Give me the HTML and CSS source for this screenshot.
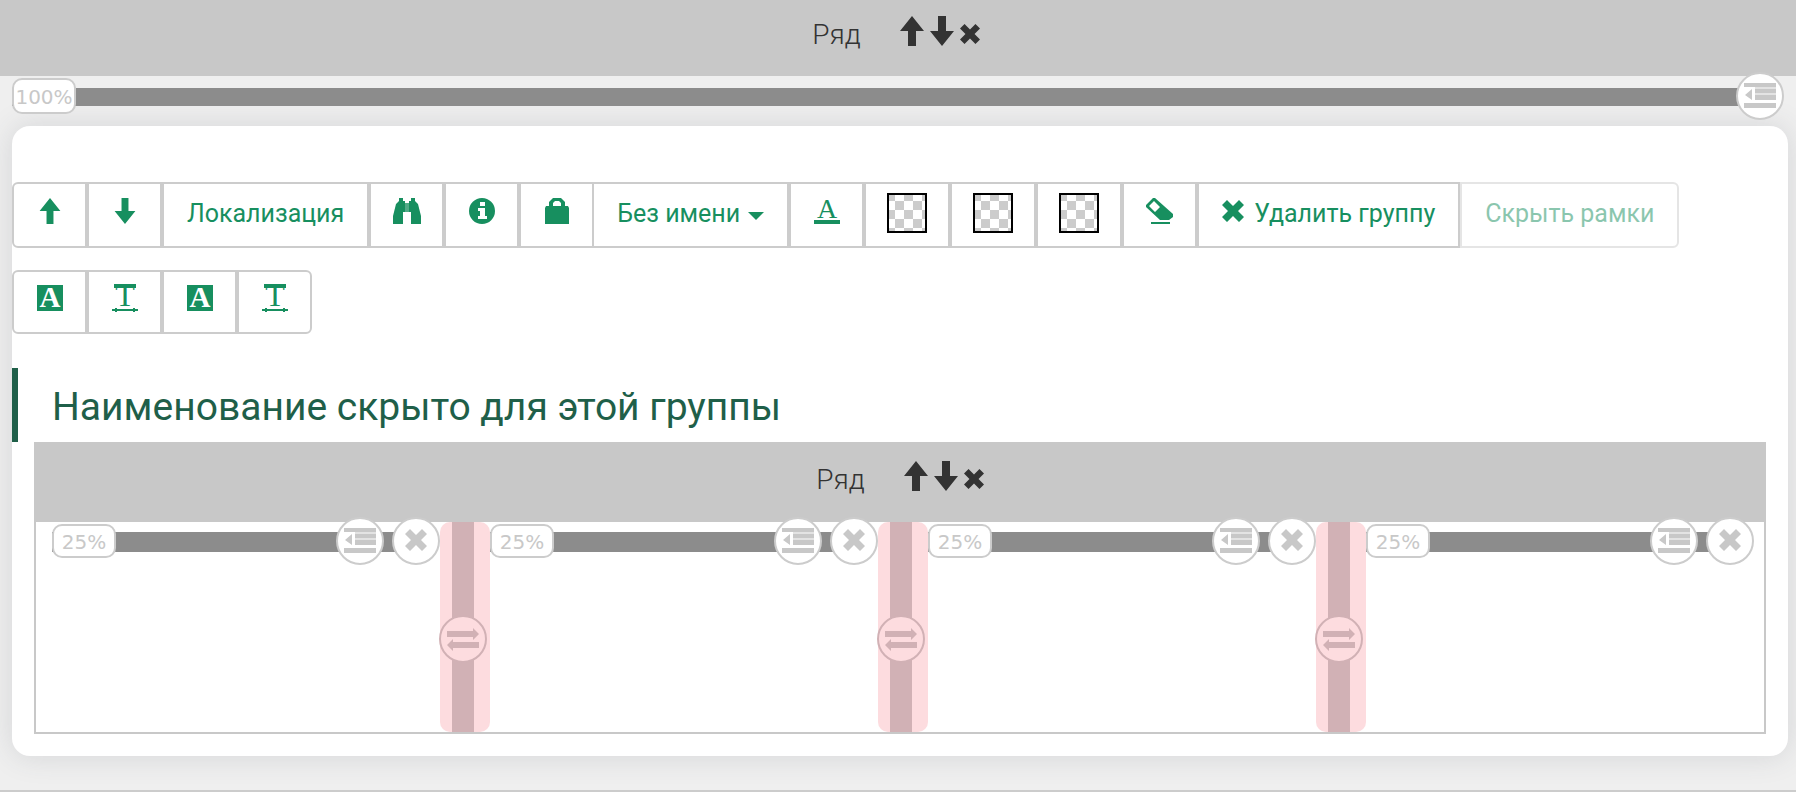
FILE: index.html
```html
<!DOCTYPE html>
<html lang="ru">
<head>
<meta charset="utf-8">
<title>Редактор групп</title>
<link rel="stylesheet" href="styles.css">
</head>
<body>
<svg class="defs" aria-hidden="true">
  <symbol id="up" viewBox="0 0 24 30"><path d="M12 0 24 15H16V30H8V15H0Z"/></symbol>
  <symbol id="down" viewBox="0 0 24 30"><path d="M8 0H16V15H24L12 30 0 15H8Z"/></symbol>
  <symbol id="cross" viewBox="0 0 22 22"><path d="M5 0 11 6 17 0 22 5 16 11 22 17 17 22 11 16 5 22 0 17 6 11 0 5Z"/></symbol>
  <symbol id="binoculars" viewBox="0 0 28 26"><path d="M6 0H10V3H12V14H10V26H0V18L3 6 6 3ZM18 0H22V3L25 6 28 18V26H18V14H16V3H18Z"/><path class="soft" d="M12 5H16V14H12Z"/></symbol>
  <symbol id="info" viewBox="0 0 26 26"><path fill-rule="evenodd" d="M13 0A13 13 0 1 1 13 26A13 13 0 1 1 13 0ZM11 4V8H16V4ZM9 10V13H11V18H9V21H18V18H16V10Z"/></symbol>
  <symbol id="bag" viewBox="0 0 26 26"><path d="M5 8V4L9 0H17L21 4V8H24L25 10V26H1V10L2 8ZM9 8H17V5L15 3H11L9 5Z" fill-rule="evenodd"/></symbol>
  <symbol id="eraser" viewBox="0 0 28 26"><path fill-rule="evenodd" d="M9 0 27 16V19L23 22H14L0 9V7L7 0ZM8 3 3 8 9 14 14 9Z"/><path d="M5 24H24V26H5Z"/></symbol>
  <symbol id="outdent" viewBox="0 0 32 25"><path d="M0 0H32V4H0ZM11 6H32V10H11ZM11 12H32V17H11ZM0 20H32V25H0ZM8 6V17L1 12Z"/><path class="faint" d="M11 4H32V6H11ZM11 10H32V12H11Z"/></symbol>
  <symbol id="swap" viewBox="0 0 32 24"><path d="M0 3H26V0L32 6 26 12V9H0ZM32 14H6V11L0 17 6 23V20H32Z"/></symbol>
</svg>

<header class="row-head">
  <span>Ряд</span>
  <div class="row-actions">
    <button class="plain" aria-label="Вверх"><svg class="arrow"><use href="#up"/></svg></button>
    <button class="plain" aria-label="Вниз"><svg class="arrow"><use href="#down"/></svg></button>
    <button class="plain" aria-label="Удалить"><svg class="cross"><use href="#cross"/></svg></button>
  </div>
</header>

<main class="page">
  <div class="rail outer">
    <input class="badge" aria-label="Ширина" value="100%">
    <button class="round" aria-label="Отступ"><svg class="outdent"><use href="#outdent"/></svg></button>
  </div>

  <section class="card">
    <div class="toolbar">
      <button class="btn" aria-label="Вверх"><svg class="small-arrow"><use href="#up"/></svg></button>
      <button class="btn" aria-label="Вниз"><svg class="small-arrow"><use href="#down"/></svg></button>
      <button class="btn label">Локализация</button>
      <button class="btn" aria-label="Поиск"><svg class="wide"><use href="#binoculars"/></svg></button>
      <button class="btn" aria-label="Информация"><svg><use href="#info"/></svg></button>
      <button class="btn joined" aria-label="Блокировка"><svg><use href="#bag"/></svg></button>
      <button class="btn label">Без имени<span class="caret"></span></button>
      <button class="btn" aria-label="Цвет текста"><svg viewBox="0 0 26 26"><text class="glyph" x="13" y="20" font-size="28">A</text><path d="M0 22H26V26H0Z"/></svg></button>
      <button class="btn" aria-label="Цвет 1"><span class="swatch"></span></button>
      <button class="btn" aria-label="Цвет 2"><span class="swatch"></span></button>
      <button class="btn" aria-label="Цвет 3"><span class="swatch"></span></button>
      <button class="btn" aria-label="Очистить"><svg class="wide"><use href="#eraser"/></svg></button>
      <button class="btn label"><svg class="cross"><use href="#cross"/></svg>Удалить группу</button>
      <button class="btn label" disabled>Скрыть рамки</button>
    </div>
    <div class="toolbar compact">
      <button class="btn" aria-label="Фон"><svg viewBox="0 0 26 26"><path d="M0 0H26V26H0Z"/><text class="glyph inverse" x="13" y="22" font-size="29">A</text></svg></button>
      <button class="btn" aria-label="Ширина текста"><svg class="tall" viewBox="0 0 26 28"><text class="glyph" x="13" y="22" font-size="32">T</text><path d="M2 0H24V4H2ZM0 25H26V27H0ZM3 24H5V28H3ZM21 24H23V28H21Z"/></svg></button>
      <button class="btn" aria-label="Фон заголовка"><svg viewBox="0 0 26 26"><path d="M0 0H26V26H0Z"/><text class="glyph inverse" x="13" y="22" font-size="29">A</text></svg></button>
      <button class="btn" aria-label="Ширина заголовка"><svg class="tall" viewBox="0 0 26 28"><text class="glyph" x="13" y="22" font-size="32">T</text><path d="M2 0H24V4H2ZM0 25H26V27H0ZM3 24H5V28H3ZM21 24H23V28H21Z"/></svg></button>
    </div>

    <h2 class="title">Наименование скрыто для этой группы</h2>

    <div class="group">
      <div class="row-head inner">
        <span>Ряд</span>
        <div class="row-actions">
          <button class="plain" aria-label="Вверх"><svg class="arrow"><use href="#up"/></svg></button>
          <button class="plain" aria-label="Вниз"><svg class="arrow"><use href="#down"/></svg></button>
          <button class="plain" aria-label="Удалить"><svg class="cross"><use href="#cross"/></svg></button>
        </div>
      </div>
      <div class="columns">
        <div class="rail">
          <input class="badge" aria-label="Ширина колонки 1" value="25%">
          <button class="round" aria-label="Отступ"><svg class="outdent"><use href="#outdent"/></svg></button>
          <button class="round" aria-label="Удалить"><svg class="cross"><use href="#cross"/></svg></button>
        </div>
        <div class="divider"><button class="round" aria-label="Поменять"><svg class="swap"><use href="#swap"/></svg></button></div>
        <div class="rail">
          <input class="badge" aria-label="Ширина колонки 2" value="25%">
          <button class="round" aria-label="Отступ"><svg class="outdent"><use href="#outdent"/></svg></button>
          <button class="round" aria-label="Удалить"><svg class="cross"><use href="#cross"/></svg></button>
        </div>
        <div class="divider"><button class="round" aria-label="Поменять"><svg class="swap"><use href="#swap"/></svg></button></div>
        <div class="rail">
          <input class="badge" aria-label="Ширина колонки 3" value="25%">
          <button class="round" aria-label="Отступ"><svg class="outdent"><use href="#outdent"/></svg></button>
          <button class="round" aria-label="Удалить"><svg class="cross"><use href="#cross"/></svg></button>
        </div>
        <div class="divider"><button class="round" aria-label="Поменять"><svg class="swap"><use href="#swap"/></svg></button></div>
        <div class="rail">
          <input class="badge" aria-label="Ширина колонки 4" value="25%">
          <button class="round" aria-label="Отступ"><svg class="outdent"><use href="#outdent"/></svg></button>
          <button class="round" aria-label="Удалить"><svg class="cross"><use href="#cross"/></svg></button>
        </div>
      </div>
    </div>
  </section>
</main>
</body>
</html>
```

FILE: styles.css
```css
* { box-sizing: border-box; }

body {
  margin: 0;
  background: #efefef;
  color: #333;
  font-family: Roboto, "Noto Sans", sans-serif;
  font-size: 25px;
}

button, input { font: inherit; margin: 0; }
svg { display: block; width: 26px; height: 26px; fill: currentColor; overflow: visible; }
.defs { position: absolute; width: 0; height: 0; }
.glyph { font-family: "Liberation Serif", serif; text-anchor: middle; }
.inverse { fill: #fff; font-weight: bold; }
.faint { opacity: 0.5; }
.soft { opacity: 0.75; }

svg.arrow { width: 24px; height: 30px; }
svg.small-arrow { width: 22px; height: 26px; }
svg.cross { width: 22px; height: 22px; }
svg.wide { width: 28px; }
svg.tall { height: 28px; }
svg.outdent { width: 32px; height: 25px; }
svg.swap { width: 32px; height: 24px; }

/* Row header */
.row-head {
  display: flex;
  align-items: center;
  justify-content: center;
  gap: 39px;
  height: 76px;
  padding: 0 4px 8px 0;
  background: #c8c8c8;
  font-size: 28px;
  font-weight: 300;
}
.inner { height: 78px; padding-right: 0; }
.row-actions { display: flex; align-items: center; gap: 6px; padding-bottom: 6px; }
.plain { padding: 0; border: 0; background: none; color: #333; }
.plain .cross { width: 20px; height: 20px; margin-top: 6px; }

/* Width rail */
.page { padding: 0 8px 34px 12px; border-bottom: 2px solid #ccc; }
.rail {
  position: relative;
  display: flex;
  align-items: center;
  gap: 8px;
  height: 38px;
}
.rail::before {
  content: "";
  position: absolute;
  inset: 10px 24px 8px 0;
  background: #8c8c8c;
}
.outer { height: 50px; padding: 0 4px 10px 0; }
.outer::before { inset: 12px 24px 20px 0; }
.badge {
  position: relative;
  width: 64px;
  height: 34px;
  margin-right: auto;
  padding: 2px 0 0;
  border: 2px solid #ccc;
  border-radius: 10px;
  background: #fff;
  color: #c8c8c8;
  font: 20px "DejaVu Sans", sans-serif;
  text-align: center;
}
.outer .badge { height: 36px; }
.round {
  position: relative;
  display: grid;
  place-items: center;
  width: 48px;
  height: 48px;
  padding: 0 0 2px;
  border: 2px solid #ccc;
  border-radius: 50%;
  background: #fff;
  color: #c8c8c8;
}

/* Card */
.card {
  padding: 56px 0 22px;
  border-radius: 18px;
  background: #fff;
  box-shadow: 0 0 30px rgba(60, 70, 80, 0.15);
}
.toolbar { display: flex; height: 66px; margin-bottom: 22px; }
.compact { height: 64px; margin-bottom: 34px; }
.btn {
  display: flex;
  align-items: center;
  justify-content: center;
  min-width: 75px;
  padding: 0 20px 8px;
  border: 2px solid #ccc;
  background: #fff;
  color: #178f5f;
  white-space: nowrap;
}
.label { padding: 0 23px 4px; }
.label .cross { margin: 0 10px 4px 0; }
.btn:first-child { border-radius: 6px 0 0 6px; }
.btn:last-child { border-radius: 0 6px 6px 0; }
.btn.joined { min-width: 73px; border-right: 0; }
.btn:disabled { opacity: 0.5; }
.caret {
  margin: 6px 0 0 8px;
  border: 8px solid transparent;
  border-top-color: currentColor;
  border-bottom: 0;
}
.swatch {
  width: 40px;
  height: 40px;
  margin: 4px 1px 0;
  border: 2px solid #000;
  background: repeating-conic-gradient(#fff 0 25%, #ccc 0 50%) -3px -3px / 18px 18px;
}
.title {
  display: flex;
  align-items: center;
  min-height: 74px;
  margin: 0;
  padding: 4px 0 0 34px;
  border-left: 6px solid #1f5f49;
  color: #1f5f49;
  font-size: 39px;
  font-weight: 400;
}

/* Nested group */
.group { margin: 0 22px; border: 2px solid #c8c8c8; }
.columns {
  display: grid;
  grid-template-columns: 1fr 50px 1fr 50px 1fr 50px 1fr;
  min-height: 210px;
  padding: 0 10px 0 16px;
}
.divider {
  display: flex;
  align-items: center;
  justify-content: center;
  padding: 24px 4px 0 0;
  border-radius: 10px;
  background: linear-gradient(#d1b1b5, #d1b1b5) 12px 0 / 22px 100% no-repeat #fddcdf;
}
.divider .round { flex: none; padding: 2px 0 0; border-color: #d1b1b5; background: #fddcdf; color: #d1b1b5; }
```
